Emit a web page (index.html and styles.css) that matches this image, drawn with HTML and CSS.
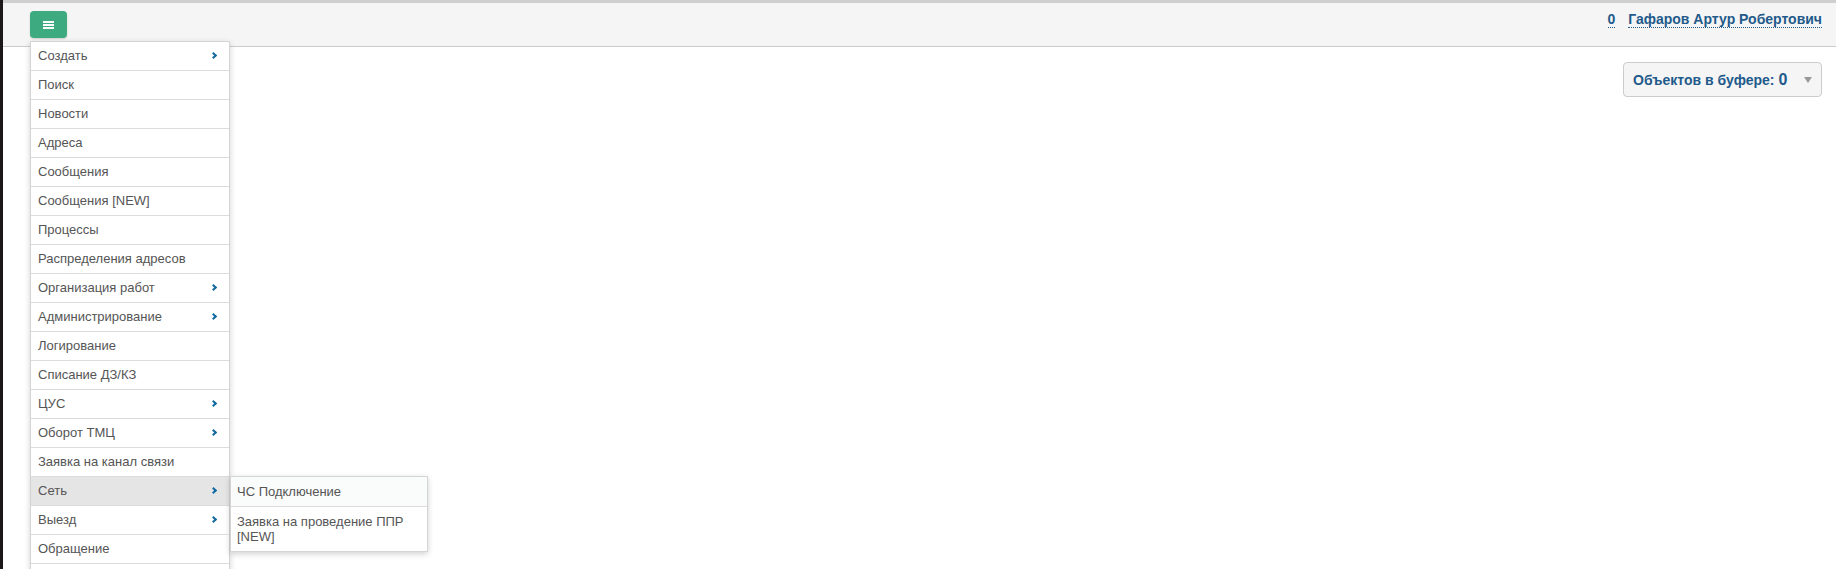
FILE: index.html
```html
<!DOCTYPE html>
<html lang="ru">
<head>
    <meta charset="UTF-8">
    <meta name="viewport" content="width=device-width, initial-scale=1.0">
    <title>Меню</title>
    <link rel="stylesheet" href="styles.css">
</head>
<body>
    <div class="page">
        <header class="topbar">
            <div class="menu-wrap">
                <button type="button" class="menu-btn">
                    <svg width="11" height="8" viewBox="0 0 11 8"><path d="M0 0h11v2H0zM0 3h11v2H0zM0 6h11v2H0z" fill="#fff"/></svg>
                </button>

                <ul class="main-menu">
                    <li class="has-sub">Создать</li>
                    <li>Поиск</li>
                    <li>Новости</li>
                    <li>Адреса</li>
                    <li>Сообщения</li>
                    <li>Сообщения [NEW]</li>
                    <li>Процессы</li>
                    <li>Распределения адресов</li>
                    <li class="has-sub">Организация работ</li>
                    <li class="has-sub">Администрирование</li>
                    <li>Логирование</li>
                    <li>Списание ДЗ/КЗ</li>
                    <li class="has-sub">ЦУС</li>
                    <li class="has-sub">Оборот ТМЦ</li>
                    <li>Заявка на канал связи</li>
                    <li class="has-sub active">Сеть
                        <ul class="sub-menu">
                            <li class="first">ЧС Подключение</li>
                            <li>Заявка на проведение ППР [NEW]</li>
                        </ul>
                    </li>
                    <li class="has-sub">Выезд</li>
                    <li>Обращение</li>
                    <li>&nbsp;</li>
                </ul>
            </div>

            <div class="user">
                <span class="dotted">0</span>
                <span class="dotted">Гафаров Артур Робертович</span>
            </div>
        </header>

        <div class="content">
            <div class="buffer">
                <span>Объектов в буфере: <b class="count">0</b></span>
                <span class="caret"></span>
            </div>
        </div>
    </div>
</body>
</html>
```

FILE: styles.css
```css
/* Basic styling */
html, body {
    margin: 0;
    height: 100%;
    overflow: hidden;
}

body {
    font-family: "Liberation Sans", Arial, sans-serif;
    background-color: #1c1719;
}

.page {
    height: 100%;
    margin-left: 3px;
    background: #fff;
    overflow: hidden;
}

.topbar {
    display: flex;
    justify-content: space-between;
    align-items: flex-start;
    height: 43px;
    background-color: #f5f5f5;
    border-top: 3px solid #cfcfcf;
    border-bottom: 1px solid #cccccc;
}

.menu-wrap {
    position: relative;
    margin: 8px 0 0 27px;
}

.menu-btn {
    display: flex;
    align-items: center;
    justify-content: center;
    width: 37px;
    height: 27px;
    padding: 0;
    border: none;
    border-radius: 4px;
    background-color: #3daa80;
    box-shadow: 0 1px 2px rgba(0, 0, 0, 0.15);
    cursor: pointer;
}

/* Dropdown menu */
.main-menu,
.sub-menu {
    list-style: none;
    margin: 0;
    padding: 0;
    background: #fff;
    border: 1px solid #d4d4d4;
    box-shadow: 0 2px 6px rgba(0, 0, 0, 0.18);
    font-size: 13px;
    color: #555;
}

.main-menu {
    position: absolute;
    top: 30px;
    left: 0;
    width: 198px;
    z-index: 10;
}

.main-menu > li {
    position: relative;
    padding: 6px 7px;
    line-height: 16px;
    border-bottom: 1px solid #dcdcdc;
}

.main-menu > li:last-child {
    border-bottom: none;
}

.main-menu > li.has-sub::after {
    content: "";
    position: absolute;
    right: 13px;
    top: 11px;
    width: 3px;
    height: 3px;
    border-top: 2px solid #0e6aa0;
    border-right: 2px solid #0e6aa0;
    transform: rotate(45deg);
}

.main-menu > li.active {
    background-color: #e5e5e5;
}

.sub-menu {
    position: absolute;
    top: -1px;
    left: 199px;
    width: 196px;
}

.sub-menu li {
    padding: 7px 6px;
    line-height: 15px;
    border-bottom: 1px solid #dcdcdc;
}

.sub-menu li.first {
    background-color: #fafbfb;
}

.sub-menu li:last-child {
    border-bottom: none;
}

/* User in the top right */
.user {
    margin: 6px 14px 0 0;
    font-size: 14px;
    line-height: 20px;
    font-weight: bold;
    color: #1f5a8b;
}

.dotted {
    border-bottom: 1px dotted #1f5a8b;
    margin-left: 9px;
}

/* Buffer */
.content {
    display: flex;
    justify-content: flex-end;
    padding: 15px 14px 0 0;
}

.buffer {
    display: flex;
    align-items: center;
    justify-content: space-between;
    box-sizing: border-box;
    width: 199px;
    height: 35px;
    padding: 0 9px;
    background-color: #f5f5f5;
    border: 1px solid #cccccc;
    border-radius: 4px;
    font-size: 14px;
    font-weight: bold;
    color: #1f5a8b;
}

.count {
    font-size: 16px;
}

.caret {
    width: 0;
    height: 0;
    border-left: 4px solid transparent;
    border-right: 4px solid transparent;
    border-top: 6px solid #999;
}
```
